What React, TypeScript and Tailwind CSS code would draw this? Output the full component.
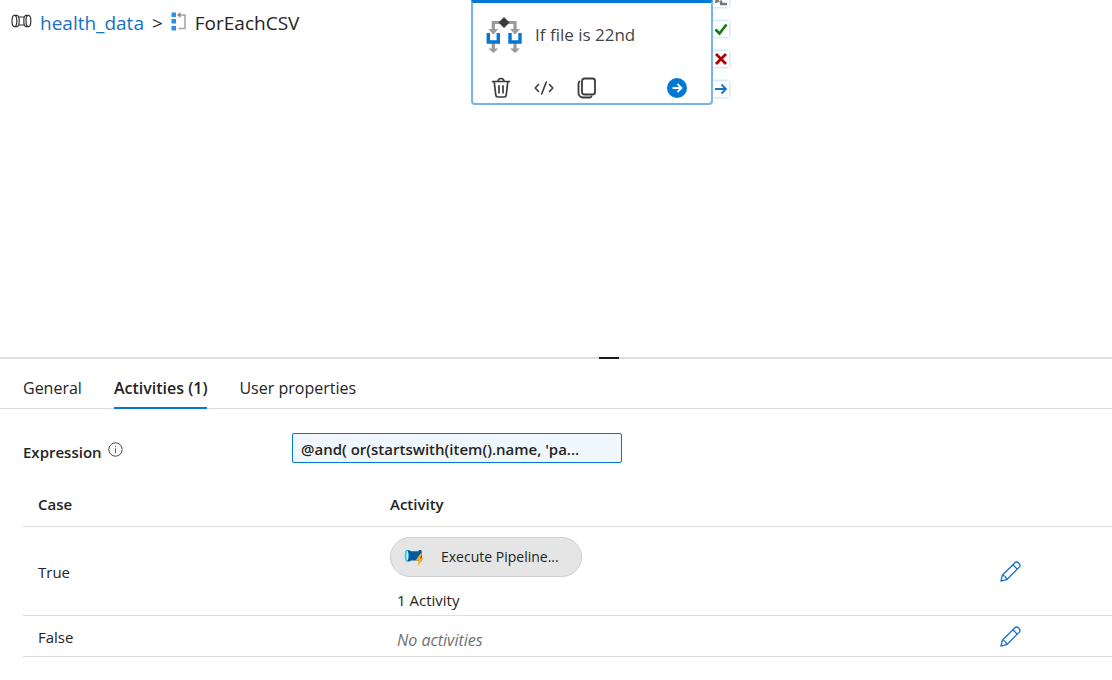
import type { ReactNode } from "react";

function PipelineIcon() {
  return (
    <svg width="21" height="14" viewBox="0 0 21 14" fill="none" stroke="#333" strokeWidth="1.2" aria-hidden="true">
      <ellipse cx="3.400" cy="7" rx="2.400" ry="5.600" />
      <path d="M3.400 1.400h2.400c1.500 0 2.400 2.500 2.400 5.600s-.9 5.600-2.400 5.600H3.400" />
      <path d="M8 3h5M8 11h5" />
      <path d="M15.200 1.400c-1.400 0-2.400 2.500-2.400 5.600s1 5.600 2.400 5.600" />
      <ellipse cx="17.400" cy="7" rx="2.400" ry="5.600" />
      <path d="M15 1.400h2.400M15 12.600h2.400" />
    </svg>
  );
}

function ForEachIcon() {
  return (
    <svg width="16" height="19" viewBox="0 0 16 19" aria-hidden="true">
      <path d="M.5.500h4.500v4.500H.5zM.5 7h4.500v4.500H.5zM.5 14h4.500v4.500H.5z" fill="#2f8fe0" />
      <path d="M8 3h6v13.500H7.500" fill="none" stroke="#a3a3a3" strokeWidth="1.500" />
      <path d="M9.500 0v6L6 3z" fill="#8a8a8a" />
    </svg>
  );
}

function IfConditionIcon() {
  return (
    <svg width="38" height="38" viewBox="0 0 38 38" aria-hidden="true">
      <path d="M8.300 14V6.500h21.700V14M8.300 27v7M30 27v7" fill="none" stroke="#9a9a9a" strokeWidth="3.200" />
      <path d="M3.300 13h10l-5 5.500zM25 13h10l-5 5.500zM3.300 32.500h10l-5 4.500zM25 32.500h10l-5 4.500z" fill="#9a9a9a" />
      <path d="M19 1l5.500 5.500L19 12l-5.500-5.500z" fill="#3b3b3b" />
      <path d="M3.300 17v9h10v-9M25 17v9h10v-9" fill="none" stroke="#0078d4" strokeWidth="3.400" />
    </svg>
  );
}

function TrashIcon() {
  return (
    <svg width="20" height="22" viewBox="0 0 20 22" fill="none" stroke="#3b3b3b" strokeWidth="1.700" strokeLinecap="round" aria-hidden="true">
      <path d="M1.500 4.500h17M7 4.500a3 3 0 0 1 6 0M3.200 4.500l1.600 13.700a2 2 0 0 0 2 1.800h6.400a2 2 0 0 0 2-1.800l1.600-13.700M8 8.800v7M12 8.800v7" />
    </svg>
  );
}

function CodeIcon() {
  return (
    <svg width="20" height="16" viewBox="0 0 20 16" fill="none" stroke="#3b3b3b" strokeWidth="1.600" strokeLinecap="round" strokeLinejoin="round" aria-hidden="true">
      <path d="M4.500 4.500L1.200 8l3.300 3.500M15.500 4.500L18.800 8l-3.300 3.500M12.300 2L7.700 14" />
    </svg>
  );
}

function CopyIcon() {
  return (
    <svg width="20" height="22" viewBox="0 0 20 22" fill="none" stroke="#3b3b3b" strokeWidth="1.800" strokeLinecap="round" aria-hidden="true">
      <rect x="5" y="1.500" width="13" height="16" rx="2.500" />
      <path d="M2.500 4.500c-.7.400-1 1-1 2V16a4.500 4.500 0 0 0 4.500 4.500h6.500c1 0 1.700-.3 2-1" />
    </svg>
  );
}

function RunIcon() {
  return (
    <svg width="20" height="20" viewBox="0 0 20 20" aria-hidden="true">
      <circle cx="10" cy="10" r="10" fill="#0078d4" />
      <path d="M5.500 10h9M10.500 6l4 4-4 4" fill="none" stroke="#fff" strokeWidth="1.800" />
    </svg>
  );
}

function PencilIcon() {
  return (
    <svg width="21" height="21" viewBox="0 0 22 22" fill="none" stroke="#1572c4" strokeWidth="1.400" strokeLinejoin="round" aria-hidden="true">
      <path d="M1 21l1.400-6L15.600 1.800a2.500 2.500 0 0 1 3.600 0l1 1a2.500 2.500 0 0 1 0 3.600L7 19.600zM13.500 4l4.500 4.500M2.400 15c2.300.2 4.300 2.200 4.600 4.600" />
    </svg>
  );
}

function InfoIcon() {
  return (
    <svg width="15" height="15" viewBox="0 0 15 15" fill="none" stroke="#4b4654" aria-hidden="true">
      <circle cx="7.500" cy="7.500" r="6.700" />
      <path d="M7.500 6.300v5M7.500 3.800v1.300" stroke="#6b4a7a" />
    </svg>
  );
}

function ExecutePipelineIcon() {
  return (
    <svg width="20" height="20" viewBox="0 0 20 20" aria-hidden="true">
      <path d="M3 3.200h2.500l1.500 1h7l1-1.200h2.300c.9 2 .9 9.500 0 11.500H15l-1-1H7l-1.500 1H3z" fill="#005ba1" />
      <ellipse cx="2.600" cy="8.800" rx="1.900" ry="6" fill="#32c8e0" />
      <ellipse cx="3.400" cy="8.800" rx="1" ry="4.600" fill="#b8f0f6" />
      <path d="M16.500 6.500l-5 7h3.300l-1.300 6 6-8.300h-3.500l2.500-4.700z" fill="#ffa91f" />
    </svg>
  );
}

function Port({ label, children }: { label: string; children: ReactNode }) {
  return (
    <button type="button" aria-label={label} className="flex size-4 items-center justify-center bg-white shadow-[0_0_3px_#8cc4f4]">
      <svg width="14" height="14" viewBox="0 0 14 14" fill="none" aria-hidden="true">
        {children}
      </svg>
    </button>
  );
}

function ActivityNode() {
  return (
    <div className="absolute -top-[9px] left-[471px] flex items-end">
      <article className="w-[242px] rounded-b border-2 border-t-3 border-[#74b3ec] border-t-[#0078d4] bg-white">
        <header className="flex h-16 items-center gap-3 px-3">
          <IfConditionIcon />
          <h2 className="text-[17px] text-[#444]">If file is 22nd</h2>
        </header>
        <div className="flex h-9 items-center pt-[6px] pr-6 pl-[18px]">
          <div className="flex flex-1 items-center gap-[23px]">
            <button type="button" aria-label="Delete"><TrashIcon /></button>
            <button type="button" aria-label="View code"><CodeIcon /></button>
            <button type="button" aria-label="Clone"><CopyIcon /></button>
          </div>
          <button type="button" aria-label="Add output"><RunIcon /></button>
        </div>
      </article>
      <div className="flex flex-col gap-[14px] pb-2">
        <Port label="On skip">
          <path d="M1 10l4-1.500M7 12V8.500M6 12h7" stroke="#777" strokeWidth="2.600" />
        </Port>
        <Port label="On success">
          <path d="M1.500 7.500l4 4L12.500 2.500" stroke="#107c10" strokeWidth="2.600" />
        </Port>
        <Port label="On failure">
          <path d="M2 2l10 10M12 2L2 12" stroke="#b00000" strokeWidth="2.800" />
        </Port>
        <Port label="On completion">
          <path d="M1 7h11M7.500 2.500L12 7l-4.500 4.500" stroke="#1572c4" strokeWidth="1.800" />
        </Port>
      </div>
    </div>
  );
}

function EditButton({ label }: { label: string }) {
  return (
    <button type="button" aria-label={label} className="block">
      <PencilIcon />
    </button>
  );
}

export default function App() {
  return (
    <div className="min-h-screen overflow-x-hidden bg-white font-['Open_Sans','Noto_Sans',sans-serif] text-[#242424]">
      <section className="relative h-[357px] overflow-hidden">
        <nav aria-label="Breadcrumb" className="flex h-[46px] items-center pl-[11px] text-[19px]">
          <span className="pb-1"><PipelineIcon /></span>
          <a href="#health_data" className="ml-2 text-[#1572c4]">health_data</a>
          <span className="mx-2">&gt;</span>
          <span className="pb-1"><ForEachIcon /></span>
          <span className="ml-2">ForEachCSV</span>
        </nav>
        <ActivityNode />
      </section>

      <section>
        <div className="flex h-[2px] justify-center bg-[#dedede] pl-[106px]">
          <div className="w-5 bg-[#1b1b1b]" />
        </div>
        <div role="tablist" className="flex h-[50px] gap-8 border-b border-[#dedede] pl-[23px] text-base">
          <button type="button" role="tab" aria-selected="false" className="h-[50px] pt-2">General</button>
          <button type="button" role="tab" aria-selected="true" className="h-[50px] border-b-2 border-[#0078d4] pt-[10px] font-semibold">
            Activities (1)
          </button>
          <button type="button" role="tab" aria-selected="false" className="h-[50px] pt-2">User properties</button>
        </div>

        <div className="pl-[23px]">
          <div className="flex items-center pt-6">
            <label htmlFor="expression" className="flex w-[269px] items-center gap-[6px] pt-2 text-[15px] font-semibold">
              Expression
              <span className="pb-[6px]"><InfoIcon /></span>
            </label>
            <input
              id="expression"
              readOnly
              defaultValue="@and( or(startswith(item().name, 'pa..."
              className="h-[30px] w-[330px] rounded-xs border border-[#0078d4] bg-[#eff6fc] px-2 pt-[2px] text-[15px] font-semibold outline-none"
            />
          </div>

          <table className="mt-[19px] w-full table-fixed border-collapse text-left text-[15px]">
            <colgroup>
              <col className="w-[352px]" />
              <col />
              <col className="w-[127px]" />
            </colgroup>
            <thead>
              <tr className="h-11 border-b border-[#dedede]">
                <th scope="col" className="pl-[15px] font-semibold">Case</th>
                <th scope="col" className="pl-[15px] font-semibold">Activity</th>
                <th scope="col" aria-label="Edit" />
              </tr>
            </thead>
            <tbody>
              <tr className="h-[89px] border-b border-[#dedede]">
                <td className="pt-[2px] pl-[15px]">True</td>
                <td className="pt-[6px] pl-[15px]">
                  <div className="flex h-10 w-48 items-center gap-[17px] rounded-full border border-[#cfcfcf] bg-[#e5e5e5] pl-[13px] text-sm">
                    <ExecutePipelineIcon />
                    <span>Execute Pipeline...</span>
                  </div>
                  <p className="mt-3 pl-[7px]">1 Activity</p>
                </td>
                <td className="pl-[15px]"><EditButton label="Edit True activities" /></td>
              </tr>
              <tr className="h-[41px] border-b border-[#dedede]">
                <td className="pt-[2px] pl-[15px]">False</td>
                <td className="pt-2 pl-[22px] text-base text-[#707070] italic">No activities</td>
                <td className="pl-[15px]"><EditButton label="Edit False activities" /></td>
              </tr>
            </tbody>
          </table>
        </div>
      </section>
    </div>
  );
}
